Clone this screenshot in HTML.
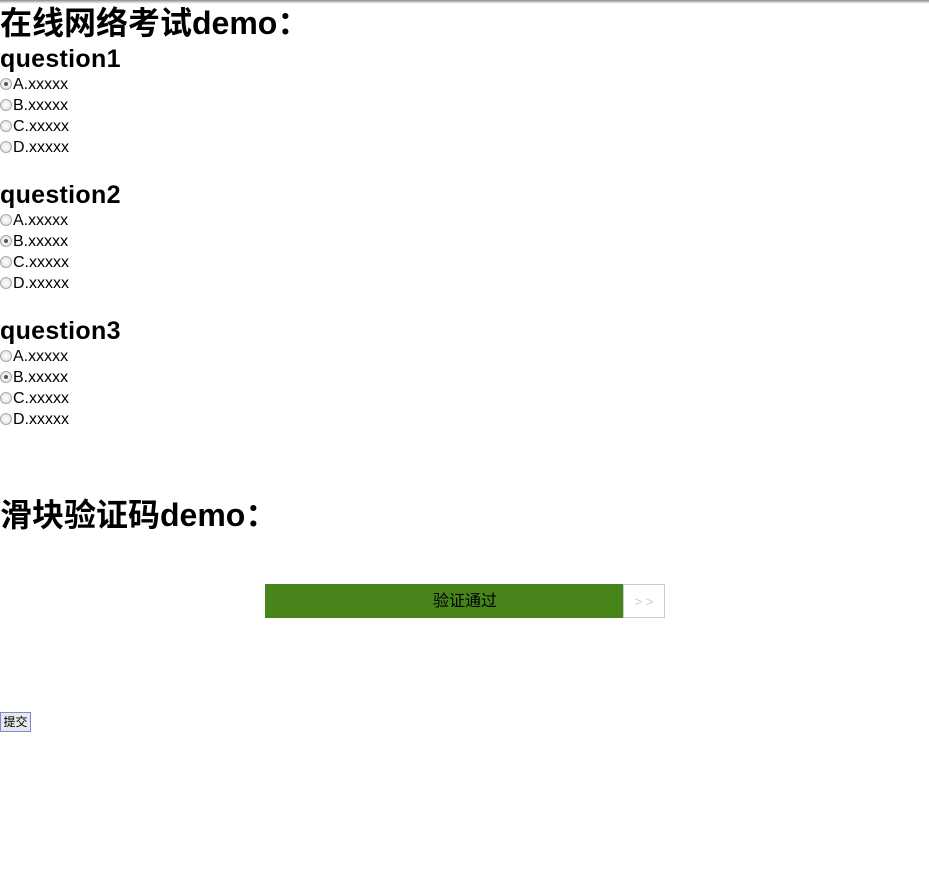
<!DOCTYPE html>
<html><head><meta charset="utf-8"><style>
html,body{margin:0;padding:0;width:929px;height:881px;background:#fff;overflow:hidden;position:relative;font-family:"Liberation Sans","Noto Sans CJK SC",sans-serif;color:#000}
.top{position:absolute;left:0;top:0;width:929px;height:4px;background:linear-gradient(#8a8a8a,#d8d8d8 60%,#fff)}
.a{position:absolute;left:0;white-space:nowrap}
h1,h2{margin:0;font-weight:bold}
.t{font-size:32px;line-height:36px}
.q{font-size:25px;line-height:28px;letter-spacing:0.3px}
.o{font-size:16px;line-height:20px}
.r{display:inline-block;width:12px;height:12px;border-radius:50%;border:1px solid #a8a8a8;background:radial-gradient(#fff,#dcdcdc);vertical-align:-1px;box-sizing:border-box;margin-right:1px;position:relative}
.r.c::after{content:"";position:absolute;left:3px;top:3px;width:4px;height:4px;border-radius:50%;background:#555}
.bar{position:absolute;left:265px;top:584px;width:358px;height:34px;background:#478419}
.bt{position:absolute;left:265px;top:585px;width:400px;font-size:16px;line-height:34px;text-align:center}
.h{position:absolute;left:623px;top:584px;width:42px;height:34px;box-sizing:border-box;border:1px solid #ccc;color:#ccc;font-size:13px;line-height:34px;text-align:center;background:#fff}
.btn{position:absolute;left:0;top:712px;width:31px;height:20px;box-sizing:border-box;border:1px solid #7a8ad8;background:#e8e8e8;font-size:12px;line-height:18px;text-align:center;padding:0}
</style></head><body>
<div class="top"></div>
<div class="a t" style="top:5px"><h1 class="t">在线网络考试demo：</h1></div>
<div class="a q" style="top:45px"><h2 class="q">question1</h2></div>
<div class="a o" style="top:75px"><span class="r c"></span>A.xxxxx</div>
<div class="a o" style="top:96px"><span class="r"></span>B.xxxxx</div>
<div class="a o" style="top:117px"><span class="r"></span>C.xxxxx</div>
<div class="a o" style="top:138px"><span class="r"></span>D.xxxxx</div>
<div class="a q" style="top:181px"><h2 class="q">question2</h2></div>
<div class="a o" style="top:211px"><span class="r"></span>A.xxxxx</div>
<div class="a o" style="top:232px"><span class="r c"></span>B.xxxxx</div>
<div class="a o" style="top:253px"><span class="r"></span>C.xxxxx</div>
<div class="a o" style="top:274px"><span class="r"></span>D.xxxxx</div>
<div class="a q" style="top:317px"><h2 class="q">question3</h2></div>
<div class="a o" style="top:347px"><span class="r"></span>A.xxxxx</div>
<div class="a o" style="top:368px"><span class="r c"></span>B.xxxxx</div>
<div class="a o" style="top:389px"><span class="r"></span>C.xxxxx</div>
<div class="a o" style="top:410px"><span class="r"></span>D.xxxxx</div>
<div class="a t" style="top:497px"><h1 class="t">滑块验证码demo：</h1></div>
<div class="bar"></div>
<div class="h">&gt; &gt;</div>
<div class="bt">验证通过</div>
<div class="btn">提交</div>
</body></html>
